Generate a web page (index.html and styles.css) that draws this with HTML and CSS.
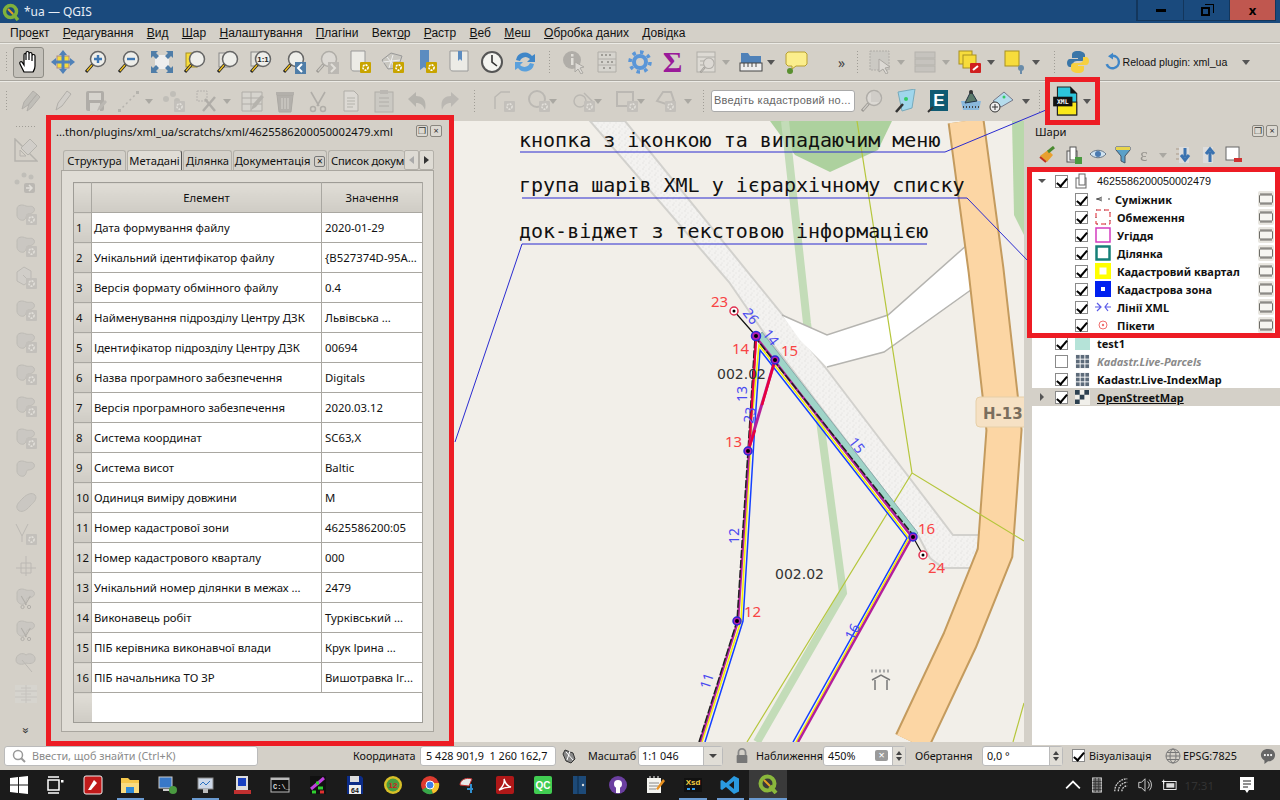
FILE: index.html
```html
<!DOCTYPE html>
<html lang="uk">
<head>
    <meta charset="UTF-8">
    <title>*ua — QGIS</title>
    <link rel="stylesheet" href="styles.css">
</head>
<body>
<svg class="defs" width="0" height="0">
    <defs>
        <g id="mag"><path d="M9 14L2 22" stroke="#222" stroke-width="3"/><path d="M8 15L3 21" stroke="#f0c020" stroke-width="1.4"/><circle cx="14" cy="9" r="7.5" fill="#eeeeea" stroke="#666" stroke-width="1.5"/></g>
        <g id="gear"><rect x="12" y="12" width="11" height="11" rx="1" fill="#c8a400"/><circle cx="17.5" cy="17.5" r="2.6" fill="none" stroke="#fff" stroke-width="1.6" stroke-dasharray="2 1"/></g>
        <g id="blob"><path d="M3 7c0-4 5-5 9-3 3 1 6-1 8 2 2 4-3 6-6 6-2 0-1 4-4 6-3 1-7-1-7-5 0-3 0-4 0-6z" fill="#b8b6ae" stroke="#8f8d86"/></g>
        <g id="scis"><path d="M5 3l8 14M19 3l-8 14" stroke="#666" stroke-width="1.6"/><circle cx="7" cy="20" r="2.5" fill="none" stroke="#666" stroke-width="1.5"/><circle cx="17" cy="20" r="2.5" fill="none" stroke="#666" stroke-width="1.5"/></g>
        <g id="doc"><path d="M5 2h10l4 4v16H5z" fill="#eee" stroke="#666"/><path d="M8 9h8M8 12h8M8 15h8M8 18h6" stroke="#777"/></g>
        <g id="chip"><rect x="1" y="1" width="16" height="16" fill="#e8e6e0" rx="2"/><rect x="2.500" y="5" width="13" height="8" rx="1" fill="#f6f5f1" stroke="#6e6d68"/><path d="M4 3v2M6 3v2M8 3v2M10 3v2M12 3v2M14 3v2M4 13v2M6 13v2M8 13v2M10 13v2M12 13v2M14 13v2" stroke="#6e6d68"/></g>
        <g id="grid"><rect x="1" y="1" width="14" height="14" fill="#5d6b7a"/><path d="M5.5 1v14M10.5 1v14M1 5.5h14M1 10.5h14" stroke="#fff" stroke-width="1"/></g>
    </defs>
</svg>

<div class="app">
    <div class="titlebar">
        <svg class="ic-18" viewBox="0 0 18 18"><circle cx="8.5" cy="8.5" r="6" fill="none" stroke="#7fb13c" stroke-width="3.5"/><path d="M11 11l5 6" stroke="#7fb13c" stroke-width="3.5"/><path d="M6 6l5 5" stroke="#e8a020" stroke-width="2"/></svg>
        <span class="title-text">*ua — QGIS</span>
        <div class="win-btns">
            <div class="win-btn"><span class="win-min"></span></div>
            <div class="win-btn"><span class="win-max"></span></div>
            <div class="win-btn win-close">x</div>
        </div>
    </div>

    <div class="menubar">
        <span>Про<u>е</u>кт</span>
        <span><u>Р</u>едагування</span>
        <span><u>В</u>ид</span>
        <span><u>Ш</u>ар</span>
        <span><u>Н</u>алаштування</span>
        <span><u>П</u>лагіни</span>
        <span>Вект<u>о</u>р</span>
        <span><u>Р</u>астр</span>
        <span><u>В</u>еб</span>
        <span><u>М</u>еш</span>
        <span><u>О</u>бробка даних</span>
        <span><u>Д</u>овідка</span>
    </div>

    <!-- toolbar 1 -->
    <div class="toolbar">
        <span class="grip"></span>
        <span class="tb pressed"><svg viewBox="0 0 24 24"><path d="M7 22l-4-8c-1-2 1-3 2-2l2 3V5c0-2 2-2 2 0v5V3c0-2 3-2 3 0v7V4c0-2 3-2 3 0v7V6c0-2 3-2 3 0v10c0 3-1 4-2 6z" fill="#fff" stroke="#000" stroke-width="1.2"/></svg></span>
        <span class="tb"><svg viewBox="0 0 24 24"><rect x="6" y="6" width="12" height="12" fill="#f7dc3c" stroke="#a88"/><path d="M12 0l4 5H8zM12 24l4-5H8zM0 12l5-4v8zM24 12l-5-4v8z" fill="#4f81b8"/><path d="M10.500 5h3v14h-3zM5 10.500h14v3H5z" fill="#4f81b8"/></svg></span>
        <span class="tb"><svg viewBox="0 0 24 24"><use href="#mag"/><path d="M10 9h8M14 5v8" stroke="#3f78b4" stroke-width="2.4"/></svg></span>
        <span class="tb"><svg viewBox="0 0 24 24"><use href="#mag"/><path d="M10 9h8" stroke="#3f78b4" stroke-width="2.4"/></svg></span>
        <span class="tb"><svg viewBox="0 0 24 24"><rect x="5" y="5" width="14" height="14" fill="#eee"/><path d="M1 1h7l-2 2 3 3-3 3-3-3-2 2zM23 1v7l-2-2-3 3-3-3 3-3-2-2zM1 23v-7l2 2 3-3 3 3-3 3 2 2zM23 23h-7l2-2-3-3 3-3 3 3 2-2z" fill="#4f7da8"/></svg></span>
        <span class="tb"><svg viewBox="0 0 24 24"><rect x="3" y="3" width="11" height="14" fill="#f7dc3c" stroke="#a89020"/><use href="#mag"/></svg></span>
        <span class="tb"><svg viewBox="0 0 24 24"><rect x="3" y="3" width="11" height="14" fill="#e4e2dc" stroke="#888"/><use href="#mag"/></svg></span>
        <span class="tb"><svg viewBox="0 0 24 24"><rect x="2" y="2" width="11" height="14" fill="#e4e2dc" stroke="#888"/><use href="#mag"/><text x="14" y="12" class="svg-bold-9" text-anchor="middle">1:1</text></svg></span>
        <span class="tb"><svg viewBox="0 0 24 24"><use href="#mag"/><rect x="13" y="12" width="11" height="12" fill="#4f7da8"/><path d="M20 14l-4 4 4 4" fill="none" stroke="#fff" stroke-width="2"/></svg></span>
        <span class="tb off"><svg viewBox="0 0 24 24"><use href="#mag"/><rect x="13" y="12" width="11" height="12" fill="#888"/><path d="M16 14l4 4-4 4" fill="none" stroke="#fff" stroke-width="2"/></svg></span>
        <span class="tb"><svg viewBox="0 0 24 24"><path d="M3 1h14v20H6c-2 0-3-1-3-3z" fill="#ecebe6" stroke="#999"/><use href="#gear"/></svg></span>
        <span class="tb"><svg viewBox="0 0 24 24"><path d="M1 10l9-7 11 3-4 12-10 1z" fill="#c9c7c0" stroke="#999"/><path d="M6 7l8 10M12 5l-4 13M2 12l17-2" stroke="#eee"/><use href="#gear"/></svg></span>
        <span class="tb"><svg viewBox="0 0 24 24"><path d="M6 0h9v18l-1 2-4-3-4 3z" fill="#5c8cc0"/><use href="#gear"/></svg></span>
        <span class="tb"><svg viewBox="0 0 24 24"><path d="M3 1h18v20H6c-2 0-3-1-3-3z" fill="#ecebe6" stroke="#999"/><path d="M11 1h4v10l-2-2-2 2z" fill="#5c8cc0"/></svg></span>
        <span class="tb"><svg viewBox="0 0 24 24"><circle cx="12" cy="12" r="10" fill="#f4f4f0" stroke="#555" stroke-width="2"/><path d="M12 5v7l5 4" fill="none" stroke="#333" stroke-width="1.6"/></svg></span>
        <span class="tb"><svg viewBox="0 0 24 24"><path d="M3 10a9 9 0 0 1 16-4l3-2v8h-8l3-3a6 6 0 0 0-10 2z" fill="#3f86c8"/><path d="M21 14a9 9 0 0 1-16 4l-3 2v-8h8l-3 3a6 6 0 0 0 10-2z" fill="#5aa0dc"/></svg></span>
        <span class="sep s1"></span>
        <span class="tb off"><svg viewBox="0 0 24 24"><circle cx="10" cy="10" r="9" fill="#666"/><rect x="9" y="8" width="2.500" height="7" fill="#fff"/><rect x="9" y="4" width="2.500" height="2.500" fill="#fff"/><path d="M13 12l9 5-4 1 3 5-2 1-3-5-3 3z" fill="#eee" stroke="#555"/></svg></span>
        <span class="tb off"><svg viewBox="0 0 24 24"><path d="M3 2h18v20H3z" fill="#ddd" stroke="#666"/><path d="M3 9h18M3 15h18" stroke="#666"/><path d="M6 5h2M10 5h2M14 5h2M6 12h2M12 12h2M16 12h2M8 18h2M14 18h2" stroke="#333" stroke-width="2"/></svg></span>
        <span class="tb"><svg viewBox="0 0 24 24"><circle cx="12" cy="12" r="6" fill="none" stroke="#5a96d8" stroke-width="4"/><circle cx="12" cy="12" r="10" fill="none" stroke="#5a96d8" stroke-width="3.5" stroke-dasharray="3.500 4.300"/></svg></span>
        <span class="tb sigma">Σ</span>
        <span class="tb off"><svg viewBox="0 0 24 24"><rect x="3" y="2" width="18" height="20" fill="#f0f0ec" stroke="#666"/><path d="M3 7h18M6 11h6M6 15h4" stroke="#666"/><use href="#mag" transform="translate(5 7) scale(.7)"/></svg></span>
        <span class="dd off"></span>
        <span class="tb"><svg viewBox="0 0 24 24"><path d="M2 3h7l2 3h11v7H2z" fill="#4f81b8"/><rect x="1" y="13" width="22" height="8" fill="#eee" stroke="#444"/><path d="M5 13v4M9 13v4M13 13v4M17 13v4" stroke="#444"/></svg></span>
        <span class="dd"></span>
        <span class="tb"><svg viewBox="0 0 24 24"><path d="M4 2h17l2 2v10l-2 2h-9l-4 3v-3H4l-2-2V4z" fill="#fbee8c" stroke="#b8a030"/><circle cx="6" cy="21" r="3" fill="#5a9030"/></svg></span>
        <span class="more">»</span>
        <span class="sep s2"></span>
        <span class="tb off"><svg viewBox="0 0 24 24"><rect x="2" y="1" width="19" height="19" fill="#bbb" stroke="#666" stroke-dasharray="2 1"/><path d="M11 9l11 8-5 1 3 5-2 1-3-5-4 3z" fill="#eee" stroke="#555"/></svg></span>
        <span class="dd off"></span>
        <span class="tb off"><svg viewBox="0 0 24 24"><rect x="2" y="2" width="20" height="6" fill="#aaa" stroke="#777"/><rect x="2" y="9" width="20" height="6" fill="#aaa" stroke="#777"/><rect x="2" y="16" width="20" height="6" fill="#aaa" stroke="#777"/></svg></span>
        <span class="dd off"></span>
        <span class="tb"><svg viewBox="0 0 24 24"><rect x="1" y="1" width="13" height="13" fill="#f7dc3c" stroke="#a89020"/><rect x="5" y="5" width="13" height="13" fill="#f7dc3c" stroke="#a89020"/><rect x="12" y="13" width="11" height="10" rx="1" fill="#d02020"/><path d="M15 20l5-4" stroke="#fff" stroke-width="2"/></svg></span>
        <span class="dd"></span>
        <span class="tb"><svg viewBox="0 0 24 24"><rect x="2" y="1" width="14" height="15" fill="#f7dc3c" stroke="#a89020"/><circle cx="18" cy="18" r="3" fill="#6a8caa"/><path d="M18 24v-5" stroke="#6a8caa" stroke-width="2"/></svg></span>
        <span class="dd"></span>
        <span class="sep s3"></span>
        <span class="tb"><svg viewBox="0 0 24 24"><path d="M12 1c-5 0-6 2-6 4v3h6v1H4c-2 0-3 2-3 4s1 4 3 4h3v-3c0-2 2-3 4-3h5c2 0 3-1 3-3V5c0-2-3-4-7-4z" fill="#3a76a8"/><path d="M12 23c5 0 6-2 6-4v-3h-6v-1h8c2 0 3-2 3-4s-1-4-3-4h-3v3c0 2-2 3-4 3H8c-2 0-3 1-3 3v3c0 2 3 4 7 4z" fill="#f6d040"/></svg></span>
        <span class="tb reload"><svg viewBox="0 0 24 24"><path d="M12 3a9 9 0 1 1-9 12l3-1a6 6 0 1 0 6-8v3L6 5l6-4z" fill="#3f86c8"/></svg></span>
        <span class="reload-text">Reload plugin: xml_ua</span>
        <span class="dd dd-r"></span>
    </div>

    <!-- toolbar 2 -->
    <div class="toolbar toolbar-2">
        <span class="grip"></span>
        <span class="tb off"><svg viewBox="0 0 24 24"><path d="M4 20l2-7 9-11 4 3-9 11zM9 22l2-7 8-10 3 3-9 11z" fill="#999" stroke="#666"/></svg></span>
        <span class="tb off"><svg viewBox="0 0 24 24"><path d="M5 21l2-7 9-12 4 3-9 12z" fill="#ccc" stroke="#666"/></svg></span>
        <span class="tb off"><svg viewBox="0 0 24 24"><rect x="2" y="2" width="18" height="20" rx="2" fill="#666"/><rect x="5" y="4" width="12" height="7" fill="#ddd"/><rect x="6" y="14" width="10" height="8" fill="#ddd"/><path d="M13 22l2-5 6-6 2 2-6 7z" fill="#888"/></svg></span>
        <span class="tb off"><svg viewBox="0 0 24 24"><path d="M2 22L20 4" stroke="#777" stroke-dasharray="2 3" stroke-width="1.5"/><rect x="1" y="20" width="3" height="3" fill="#777"/><rect x="19" y="2" width="3" height="3" fill="#777"/></svg></span>
        <span class="dd off"></span>
        <span class="tb off"><svg viewBox="0 0 24 24"><circle cx="4" cy="10" r="3" fill="#999"/><circle cx="11" cy="5" r="3" fill="#999"/><circle cx="15" cy="12" r="3" fill="#999"/><use href="#gear"/></svg></span>
        <span class="tb off"><svg viewBox="0 0 24 24"><rect x="2" y="2" width="10" height="10" fill="none" stroke="#777" stroke-dasharray="2 1"/><path d="M8 22L20 8M10 10l10 12" stroke="#666" stroke-width="2.5"/></svg></span>
        <span class="dd off"></span>
        <span class="tb off"><svg viewBox="0 0 24 24"><path d="M2 3h20v19H2z" fill="#ddd" stroke="#666"/><path d="M2 9h20M2 15h20M11 3v19" stroke="#666"/><path d="M11 21l2-6 8-9 3 2-8 10z" fill="#777"/></svg></span>
        <span class="tb off"><svg viewBox="0 0 24 24"><path d="M4 6h16l-2 17H6z" fill="#8c6a5c" stroke="#555"/><rect x="3" y="3" width="18" height="3" fill="#8c6a5c"/><path d="M9 9v11M12 9v11M15 9v11" stroke="#ddd"/></svg></span>
        <span class="tb off"><svg viewBox="0 0 24 24"><use href="#scis"/></svg></span>
        <span class="tb off"><svg viewBox="0 0 24 24"><use href="#doc"/></svg></span>
        <span class="tb off"><svg viewBox="0 0 24 24"><rect x="3" y="3" width="18" height="20" fill="#bbb" stroke="#666"/><rect x="8" y="1" width="8" height="4" fill="#888"/><path d="M7 9h10M7 13h10M7 17h10" stroke="#666"/></svg></span>
        <span class="tb off"><svg viewBox="0 0 24 24"><path d="M3 10l8-7v4c7 0 11 4 9 14-2-5-4-7-9-7v4z" fill="#7a7a7a"/></svg></span>
        <span class="tb off"><svg viewBox="0 0 24 24"><path d="M21 10l-8-7v4C6 7 2 11 4 21c2-5 4-7 9-7v4z" fill="#888"/></svg></span>
        <span class="sep s4"></span>
        <span class="tb tb-n off"><svg viewBox="0 0 24 24"><path d="M3 20V8l6-5h9" fill="none" stroke="#888" stroke-width="1.500"/><use href="#gear"/></svg></span>
        <span class="tb tb-n n2 off"><svg viewBox="0 0 24 24"><circle cx="10" cy="10" r="8" fill="none" stroke="#888" stroke-width="2"/><use href="#gear"/></svg></span>
        <span class="dd dd-n off"></span>
        <span class="tb tb-n n3 off"><svg viewBox="0 0 24 24"><circle cx="8" cy="12" r="6" fill="none" stroke="#888" stroke-width="1.500"/><path d="M12 4l8 8-6 6" fill="none" stroke="#888" stroke-width="1.500"/><use href="#gear"/></svg></span>
        <span class="dd dd-n off"></span>
        <span class="tb tb-n n4 off"><svg viewBox="0 0 24 24"><rect x="2" y="3" width="16" height="14" fill="none" stroke="#888" stroke-width="2"/><use href="#gear"/></svg></span>
        <span class="dd dd-n off"></span>
        <span class="tb tb-n n5 off"><svg viewBox="0 0 24 24"><path d="M4 12l6-9h8l3 9-8 3z" fill="none" stroke="#888" stroke-width="2"/><use href="#gear"/></svg></span>
        <span class="dd dd-p off"></span>
        <span class="sep s5"></span>
        <div class="cad-input">Введіть кадастровий но...</div>
        <span class="tb off"><svg viewBox="0 0 24 24"><use href="#mag"/><rect x="11" y="3" width="9" height="10" fill="#8aa" opacity=".5"/></svg></span>
        <span class="tb"><svg viewBox="0 0 24 24"><path d="M5 3l17-3-3 19-10 3z" fill="#9fd6ec" stroke="#7ab"/><circle cx="13" cy="10" r="2" fill="#3c6"/><path d="M3 23l7-8" stroke="#333" stroke-width="2.500"/></svg></span>
        <span class="tb"><svg viewBox="0 0 24 24"><rect x="4" y="1" width="18" height="21" fill="#0f5a72"/><text x="13" y="17" class="svg-e" text-anchor="middle">E</text><path d="M2 23l5-5" stroke="#333" stroke-width="2"/></svg></span>
        <span class="tb"><svg viewBox="0 0 24 24"><path d="M2 12h20l-2 9H4z" fill="#8ab8dc"/><path d="M6 14l6-12 6 10z" fill="#5a7a6a" stroke="#234"/><circle cx="12" cy="3" r="2" fill="#333"/><path d="M4 18h16" stroke="#444" stroke-dasharray="1 2" stroke-width="2"/></svg></span>
        <span class="tb n6"><svg viewBox="0 0 24 24"><path d="M4 12l11-9 9 8-12 7z" fill="#b5dced" stroke="#778"/><circle cx="15" cy="8" r="1.500" fill="#3c6"/><circle cx="6" cy="18" r="5" fill="#eee" stroke="#333"/><path d="M3 18h6M6 15v6" stroke="#333"/></svg></span>
        <span class="dd dd-p"></span>
        <span class="sep s6"></span>
        <span class="tb tb-xml"><svg viewBox="0 0 24 28"><path d="M4 1h12l6 6v20H4z" fill="#2cc5dc" stroke="#222"/><rect x="4" y="15" width="18" height="12" fill="#f9e81a" stroke="#222"/><path d="M16 1l6 6h-6z" fill="#111"/><rect x="0" y="10" width="18" height="9" fill="#111"/><text x="9" y="17" class="svg-xml" text-anchor="middle">XML</text></svg></span>
        <span class="dd"></span>
    </div>

    <div class="main">
        <!-- left digitizing strip -->
        <div class="strip">
            <span class="strip-grip"></span>
            <span class="st off"><svg viewBox="0 0 24 24"><path d="M1 1v22h22z" fill="none" stroke="#777" stroke-width="1.500"/><path d="M6 12v6h6z" fill="none" stroke="#777"/><path d="M16 1l7 7-9 9-7-7z" fill="#ccc" stroke="#777"/></svg></span>
            <span class="st off"><svg viewBox="0 0 24 24"><circle cx="3" cy="12" r="2.500" fill="#999"/><circle cx="10" cy="5" r="2.500" fill="#999"/><circle cx="17" cy="7" r="2.500" fill="#999"/><rect x="10" y="13" width="11" height="10" rx="2" fill="#888"/><path d="M12 18h5M15 15l3 3-3 3" stroke="#fff" fill="none" stroke-width="1.500"/></svg></span>
            <span class="st off"><svg viewBox="0 0 24 24"><use href="#blob"/><use href="#gear"/></svg></span>
            <span class="st off"><svg viewBox="0 0 24 24"><use href="#blob"/><use href="#gear"/></svg></span>
            <span class="st off"><svg viewBox="0 0 24 24"><path d="M3 6l7-5 7 4v9l-7 5-7-4z" fill="#ccc" stroke="#888"/><path d="M9 9l6 6" stroke="#888"/><use href="#gear"/></svg></span>
            <span class="st off"><svg viewBox="0 0 24 24"><use href="#blob"/><use href="#gear"/></svg></span>
            <span class="st off"><svg viewBox="0 0 24 24"><use href="#blob"/><use href="#gear"/></svg></span>
            <span class="st off"><svg viewBox="0 0 24 24"><use href="#blob"/><use href="#gear"/></svg></span>
            <span class="st off"><svg viewBox="0 0 24 24"><use href="#blob"/><use href="#gear"/></svg></span>
            <span class="st off"><svg viewBox="0 0 24 24"><use href="#blob"/><use href="#gear"/></svg></span>
            <span class="st off"><svg viewBox="0 0 24 24"><use href="#blob"/></svg></span>
            <span class="st off"><svg viewBox="0 0 24 24"><path d="M4 20c-3-4 0-7 5-12 4-4 9-6 12-3 3 4-2 8-5 11-4 5-9 7-12 4z" fill="#b8b6ae" stroke="#8f8d86"/></svg></span>
            <span class="st off"><svg viewBox="0 0 24 24"><path d="M2 2l6 12 6-12M8 14v6" fill="none" stroke="#888"/><use href="#gear"/></svg></span>
            <span class="st off"><svg viewBox="0 0 24 24"><path d="M2 14h20M12 2v20M7 9h10v10H7z" fill="none" stroke="#888"/></svg></span>
            <span class="st off"><svg viewBox="0 0 24 24"><use href="#blob"/><use href="#scis" transform="translate(4 8) scale(.65)"/></svg></span>
            <span class="st off"><svg viewBox="0 0 24 24"><use href="#blob"/><use href="#scis" transform="translate(4 8) scale(.65)"/></svg></span>
            <span class="st off"><svg viewBox="0 0 24 24"><path d="M2 10c0-6 7-8 10-5 4-3 10 0 9 5-1 4-6 4-9 3-3 2-10 2-10-3z" fill="#b8b6ae" stroke="#8f8d86"/><path d="M8 10l10 12" stroke="#888"/></svg></span>
            <span class="st off"><svg viewBox="0 0 24 24"><rect x="1" y="3" width="22" height="18" fill="#ddd"/><path d="M1 9h22M1 15h22M12 3v18M7 6h10M7 12h10M7 18h10" stroke="#aaa"/></svg></span>
            <span class="strip-more">»</span>
        </div>

        <!-- xml dock -->
        <div class="dock-left">
            <div class="dock-head">
                <span class="dock-title">...thon/plugins/xml_ua/scratchs/xml/4625586200050002479.xml</span>
                <span class="dock-btn">❐</span><span class="dock-btn">×</span>
            </div>
            <div class="tabs">
                <div class="tab t1">Структура</div>
                <div class="tab t2 tab-on">Метадані</div>
                <div class="tab t3">Ділянка</div>
                <div class="tab t4">Документація <span class="tab-x">×</span></div>
                <div class="tab tab-cut">Список докум</div>
                <div class="tab-scroll"><span class="arr-l"></span></div>
                <div class="tab-scroll"><span class="arr-r"></span></div>
            </div>
            <div class="pane">
                <table class="meta">
                    <colgroup><col class="c0"><col class="c1"><col class="c2"></colgroup>
                    <thead><tr><th></th><th>Елемент</th><th>Значення</th></tr></thead>
                    <tbody>
                        <tr><th>1</th><td>Дата формування файлу</td><td>2020-01-29</td></tr>
                        <tr><th>2</th><td>Унікальний ідентифікатор файлу</td><td>{B527374D-95A...</td></tr>
                        <tr><th>3</th><td>Версія формату обмінного файлу</td><td>0.4</td></tr>
                        <tr><th>4</th><td>Найменування підрозділу Центру ДЗК</td><td>Львівська ...</td></tr>
                        <tr><th>5</th><td>Ідентифікатор підрозділу Центру ДЗК</td><td>00694</td></tr>
                        <tr><th>6</th><td>Назва програмного забезпечення</td><td>Digitals</td></tr>
                        <tr><th>7</th><td>Версія програмного забезпечення</td><td>2020.03.12</td></tr>
                        <tr><th>8</th><td>Система координат</td><td>SC63,X</td></tr>
                        <tr><th>9</th><td>Система висот</td><td>Baltic</td></tr>
                        <tr><th>10</th><td>Одиниця виміру довжини</td><td>M</td></tr>
                        <tr><th>11</th><td>Номер кадастрової зони</td><td>4625586200:05</td></tr>
                        <tr><th>12</th><td>Номер кадастрового кварталу</td><td>000</td></tr>
                        <tr><th>13</th><td>Унікальний номер ділянки в межах ...</td><td>2479</td></tr>
                        <tr><th>14</th><td>Виконавець робіт</td><td>Турківський ...</td></tr>
                        <tr><th>15</th><td>ПІБ керівника виконавчої влади</td><td>Крук Ірина ...</td></tr>
                        <tr><th>16</th><td>ПІБ начальника ТО ЗР</td><td>Вишотравка Іг...</td></tr>
                        <tr class="row-empty"><th></th><td></td><td></td></tr>
                    </tbody>
                </table>
            </div>
        </div>

        <!-- map canvas -->
        <div class="map">
            <svg class="map-svg" viewBox="454 121 570 621">
                <defs>
                    <pattern id="speck" width="6" height="6" patternUnits="userSpaceOnUse">
                        <rect width="6" height="6" fill="#f3f2f0"/>
                        <circle cx="1" cy="1" r=".7" fill="#e2e1de"/><circle cx="4" cy="3" r=".7" fill="#e6e5e2"/><circle cx="2" cy="5" r=".6" fill="#dfdedb"/>
                    </pattern>
                </defs>
                <rect x="454" y="121" width="570" height="621" fill="#f2efe9"/>
                <!-- landuse -->
                <path d="M770 121H892L878 150 830 172 795 155Z" fill="#add19e"/>
                <path d="M1012 121H1024V235L1014 215Z" fill="#b9d8ab"/>
                <path d="M785 121L807 323 843 593 757 742" fill="none" stroke="#c3dcb8" stroke-width="8"/>
                <!-- footway and white branch -->
                <path d="M590 121H625L825 367 873 430 953 535H981L973 568H943L930 558 918 535 762 330 729 282Z" fill="url(#speck)" stroke="#d2d1cd" stroke-width="2"/>
                <path d="M782 315L827 335 888 315 967 245 982 282 884 352 827 367 800 340Z" fill="#fff"/>
                <path d="M782 315L827 335 888 315 967 245M982 282L884 352 827 367" fill="none" stroke="#b5b4b0" stroke-width="1.500"/>
                <!-- orange road -->
                <path d="M966 121L986 270 1004 430 995 553 960 640 912 742" fill="none" stroke="#c49b5e" stroke-width="37"/>
                <path d="M966 121L986 270 1004 430 995 553 960 640 912 742" fill="none" stroke="#fcd6a4" stroke-width="33"/>
                <!-- admin lines -->
                <path d="M857 121L912 473 1024 541M912 473L747 742M1024 703L1013 742" fill="none" stroke="#b5c63c" stroke-width="1.2"/>
                <!-- teal band -->
                <path d="M762 332L918 533 912 538 757 340Z" fill="#9fd4c8" stroke="#8aa" stroke-width="1"/>
                <!-- parcel outlines -->
                <path d="M705 742L743 621 755 423 760 350 907 538 793 742" fill="none" stroke="#1440ff" stroke-width="1.500"/>
                <path d="M702 742L741 621 752 420 759 345 909 538 796 742" fill="none" stroke="#f5f200" stroke-width="1.500"/>
                <path d="M700 742L738 621 749 451 756 337 912 537 798 742" fill="none" stroke="#b3209c" stroke-width="2.500"/>
                <path d="M699 742L737 621 748 451 755 337 913 535" fill="none" stroke="#222" stroke-width="1.500" stroke-dasharray="8 2"/>
                <path d="M749 451L756 340" stroke="#e8003c" stroke-width="2"/>
                <path d="M775 360L748 451" stroke="#b3209c" stroke-width="3"/>
                <path d="M775 360L762 405M755 430L748 451" stroke="#e8003c" stroke-width="2.500"/>
                <path d="M734 311L756 336M923 555L913 537" stroke="#111" stroke-width="1.200"/>
                <!-- vertices -->
                <g class="vx"><circle cx="756" cy="336" r="4.500"/><circle cx="775" cy="360" r="4"/><circle cx="748" cy="451" r="4"/><circle cx="737" cy="621" r="4"/><circle cx="913" cy="537" r="4"/></g>
                <g class="vx vx-w"><circle cx="734" cy="311" r="4"/><circle cx="923" cy="555" r="4"/></g>
                <g class="dots"><circle cx="756" cy="336" r="2"/><circle cx="775" cy="360" r="2"/><circle cx="748" cy="451" r="2"/><circle cx="737" cy="621" r="2"/><circle cx="913" cy="537" r="2"/><circle cx="734" cy="311" r="1.500"/><circle cx="923" cy="555" r="1.500"/></g>
                <!-- labels -->
                <g class="lbl-red">
                    <text x="711" y="307">23</text><text x="732" y="354">14</text><text x="781" y="356">15</text>
                    <text x="725" y="447">13</text><text x="744" y="617">12</text><text x="918" y="534">16</text><text x="928" y="573">24</text>
                </g>
                <g class="lbl-blue">
                    <text transform="translate(742 313) rotate(52)">26</text><text transform="translate(762 334) rotate(52)">14</text>
                    <text transform="translate(848 442) rotate(52)">15</text><text transform="translate(747 402) rotate(-90)">13</text>
                    <text transform="translate(753 424) rotate(-80)">23</text><text transform="translate(739 544) rotate(-90)">12</text>
                    <text transform="translate(709 690) rotate(-72)">11</text><text transform="translate(853 641) rotate(-62)">16</text>
                </g>
                <text x="717" y="379" class="lbl-grey">002.02</text>
                <text x="775" y="579" class="lbl-grey">002.02</text>
                <!-- shield -->
                <rect x="976" y="397" width="60" height="30" rx="4" fill="#f6e1c4" stroke="#e6cfa8"/>
                <text x="983" y="419" class="lbl-shield">Н-13</text>
                <!-- hut -->
                <g class="hut"><path d="M872 680L881 675 890 680M875 680V690M887 680V690" fill="none" stroke="#777" stroke-width="1.500"/><path d="M871 671h20" stroke="#aaa" stroke-width="3" stroke-dasharray="2 2"/></g>
            </svg>
        </div>

        <!-- layers dock -->
        <div class="dock-right">
            <div class="dock-head dock-head-r">
                <span class="dock-title">Шари</span>
                <span class="dock-btn">❐</span><span class="dock-btn">×</span>
            </div>
            <div class="layer-tools">
                <svg class="lt lt1" viewBox="0 0 18 18"><path d="M2 10l8-6 5 5-6 7z" fill="#e8a030"/><path d="M10 6l6-5" stroke="#4a8a30" stroke-width="3"/><path d="M2 11l6 5" stroke="#c03020" stroke-width="2"/></svg>
                <svg class="lt lt2" viewBox="0 0 18 18"><rect x="2" y="5" width="10" height="11" fill="#eee" stroke="#555"/><rect x="5" y="1" width="6" height="13" fill="#fff" stroke="#555"/><rect x="10" y="11" width="7" height="7" fill="#4a9a40"/></svg>
                <svg class="lt lt3" viewBox="0 0 18 18"><path d="M0 8c4-5 12-5 16 0-4 5-12 5-16 0z" fill="#cfe2f0" stroke="#678"/><circle cx="8" cy="8" r="3" fill="#4a7ab0"/></svg>
                <svg class="lt lt4" viewBox="0 0 18 18"><path d="M1 1h14v3l-5 6v7l-4-2v-5L1 4z" fill="#5aa0c8" stroke="#456"/><rect x="1" y="1" width="14" height="3" fill="#e8d44c"/></svg>
                <span class="lt-e off">ε</span>
                <span class="dd off lt-dd"></span>
                <svg class="lt lt6" viewBox="0 0 18 18"><path d="M1 3h3M1 8h3M1 13h3" stroke="#a98"/><rect x="4" y="1" width="10" height="16" fill="#ddd"/><path d="M10 2v9M6 9l4 5 4-5" stroke="#3a72b0" stroke-width="3" fill="none"/></svg>
                <svg class="lt lt7" viewBox="0 0 18 18"><rect x="3" y="1" width="10" height="16" fill="#ddd"/><path d="M10 16V6M6 8l4-5 4 5" stroke="#3a72b0" stroke-width="3" fill="none"/></svg>
                <svg class="lt lt8" viewBox="0 0 18 18"><rect x="1" y="1" width="13" height="13" fill="#fff" stroke="#666"/><rect x="9" y="12" width="8" height="4" fill="#d03030"/></svg>
            </div>
            <div class="tree">
                <div class="row r0"><span class="arr-d"></span><span class="cb on"></span><svg class="sw sw-g" viewBox="0 0 16 16"><rect x="1" y="5" width="10" height="10" fill="none" stroke="#666"/><rect x="4" y="1" width="6" height="11" fill="#fff" stroke="#666"/></svg><span class="lname lname-reg">4625586200050002479</span></div>
                <div class="row r1"><span class="cb on"></span><svg class="sw sw-c" viewBox="0 0 16 16"><path d="M1 8h6M14 7v2" stroke="#444"/><path d="M7 6L2 8l5 2" fill="none" stroke="#444" stroke-width=".8"/></svg><span class="lname lname-tight">Суміжник</span><svg class="ind" viewBox="0 0 18 18"><use href="#chip"/></svg></div>
                <div class="row r1"><span class="cb on"></span><svg class="sw" viewBox="0 0 16 16"><rect x="1" y="1" width="14" height="14" fill="none" stroke="#e0202c" stroke-dasharray="5 3"/><rect x="1" y="1" width="14" height="14" fill="none" stroke="#333" stroke-width=".5" stroke-dasharray="1 7"/></svg><span class="lname">Обмеження</span><svg class="ind" viewBox="0 0 18 18"><use href="#chip"/></svg></div>
                <div class="row r1"><span class="cb on"></span><svg class="sw" viewBox="0 0 16 16"><rect x="1" y="1" width="14" height="14" fill="none" stroke="#d43cc0" stroke-width="1.500"/></svg><span class="lname">Угіддя</span><svg class="ind" viewBox="0 0 18 18"><use href="#chip"/></svg></div>
                <div class="row r1"><span class="cb on"></span><svg class="sw" viewBox="0 0 16 16"><rect x="1.500" y="1.500" width="13" height="13" fill="#fff" stroke="#168078" stroke-width="2.500"/></svg><span class="lname">Ділянка</span><svg class="ind" viewBox="0 0 18 18"><use href="#chip"/></svg></div>
                <div class="row r1"><span class="cb on"></span><svg class="sw" viewBox="0 0 16 16"><rect width="16" height="16" fill="#ffff00"/><rect x="4.500" y="4.500" width="7" height="7" fill="#fff"/></svg><span class="lname">Кадастровий квартал</span><svg class="ind" viewBox="0 0 18 18"><use href="#chip"/></svg></div>
                <div class="row r1"><span class="cb on"></span><svg class="sw" viewBox="0 0 16 16"><rect width="16" height="16" fill="#0020f0"/><rect x="6" y="6" width="4" height="4" fill="#fff"/></svg><span class="lname">Кадастрова зона</span><svg class="ind" viewBox="0 0 18 18"><use href="#chip"/></svg></div>
                <div class="row r1"><span class="cb on"></span><svg class="sw" viewBox="0 0 16 16"><path d="M0 8h6M10 8h6M2 4l4 4-4 4M13 4l-3 4 3 4" fill="none" stroke="#5a5ae8" stroke-width="1.200"/></svg><span class="lname">Лінії XML</span><svg class="ind" viewBox="0 0 18 18"><use href="#chip"/></svg></div>
                <div class="row r1"><span class="cb on"></span><svg class="sw" viewBox="0 0 16 16"><circle cx="8" cy="8" r="4" fill="none" stroke="#f07070"/><circle cx="8" cy="8" r="1.200" fill="#f07070"/></svg><span class="lname">Пікети</span><svg class="ind" viewBox="0 0 18 18"><use href="#chip"/></svg></div>
                <div class="row r2"><span class="cb on"></span><span class="swatch-teal"></span><span class="lname">test1</span></div>
                <div class="row r2"><span class="cb"></span><svg class="sw-grid" viewBox="0 0 16 16"><use href="#grid"/></svg><span class="lname lname-off">Kadastr.Live-Parcels</span></div>
                <div class="row r2"><span class="cb on"></span><svg class="sw-grid" viewBox="0 0 16 16"><use href="#grid"/></svg><span class="lname">Kadastr.Live-IndexMap</span></div>
                <div class="row r2 row-sel"><span class="arr-rr"></span><span class="cb on"></span><svg class="sw-grid" viewBox="0 0 16 16"><rect width="16" height="16" fill="#f0efea"/><path d="M0 0h5v5H0zM10 0h5v5h-5zM5 5h5v5H5zM0 10h5v5H0z" fill="#2c4050"/></svg><span class="lname lname-u">OpenStreetMap</span></div>
            </div>
        </div>
    </div>

    <!-- status bar -->
    <div class="statusbar">
        <div class="locator"><svg class="ic-14" viewBox="0 0 14 14"><circle cx="6" cy="6" r="4.500" fill="none" stroke="#999" stroke-width="1.500"/><path d="M9 9l4 4" stroke="#999" stroke-width="2"/></svg><span>Ввести, щоб знайти (Ctrl+K)</span></div>
        <span class="st-label st-coord">Координата</span>
        <div class="field f-coord">5 428 901,9  1 260 162,7</div>
        <svg class="ic-16 mouse" viewBox="0 0 16 16"><path d="M3 2l8 3 2 6-4 4-5-2-3-7z" fill="#888" stroke="#333"/><path d="M4 4l7 8M8 3l-3 9" stroke="#fff"/></svg>
        <span class="st-label st-scale">Масштаб</span>
        <div class="combo"><span>1:1 046</span><span class="combo-btn"><span class="dd-in"></span></span></div>
        <svg class="ic-16 lock" viewBox="0 0 14 18"><path d="M3 8V5a4 4 0 0 1 8 0v3" fill="none" stroke="#888" stroke-width="2"/><rect x="1" y="8" width="12" height="9" rx="1" fill="#777"/></svg>
        <span class="st-label st-mag">Наближення</span>
        <div class="spin s-mag"><span class="spin-val">450%</span><span class="spin-x">×</span><span class="spin-btn"><i class="up"></i><i class="down"></i></span></div>
        <span class="st-label st-rot">Обертання</span>
        <div class="spin s-rot"><span class="spin-val">0,0 °</span><span class="spin-btn"><i class="up"></i><i class="down"></i></span></div>
        <span class="cb on st-cb"></span>
        <span class="st-label st-vis">Візуалізація</span>
        <svg class="ic-16 globe" viewBox="0 0 16 16"><circle cx="8" cy="8" r="7" fill="none" stroke="#777"/><ellipse cx="8" cy="8" rx="3" ry="7" fill="none" stroke="#777"/><path d="M1 8h14M2 4.500h12M2 11.500h12" stroke="#777"/></svg>
        <span class="st-label st-epsg">EPSG:7825</span>
        <svg class="ic-16 bubble" viewBox="0 0 18 18"><path d="M9 1c5 0 8 3 8 7s-3 7-8 7l-4 3v-4C3 13 1 11 1 8c0-4 3-7 8-7z" fill="#666"/><circle cx="5.500" cy="8" r="1.200" fill="#fff"/><circle cx="9" cy="8" r="1.200" fill="#fff"/><circle cx="12.500" cy="8" r="1.200" fill="#fff"/></svg>
    </div>

    <!-- taskbar -->
    <div class="taskbar">
        <span class="tk tk-win"><svg viewBox="0 0 20 20"><path d="M1 3l8-1v7.500H1zM10 2l9-1v8.500h-9zM1 10.500h8V18l-8-1zM10 10.500h9V19l-9-1z" fill="#fff"/></svg></span>
        <span class="tk tk-view"><svg viewBox="0 0 20 20"><rect x="3" y="5" width="11" height="10" fill="none" stroke="#fff" stroke-width="1.500"/><path d="M3 2h11M3 18h11" stroke="#fff" stroke-width="1.500"/><rect x="16" y="5" width="2.500" height="2.500" fill="#fff"/></svg></span>
        <span class="tk"><svg viewBox="0 0 20 20"><rect x="1" y="1" width="18" height="18" rx="2" fill="#c01a1a" stroke="#eee"/><path d="M5 15l6-10 3 3-6 7z" fill="#fff"/></svg></span>
        <span class="tk tk-on"><svg viewBox="0 0 20 20"><path d="M1 3h7l2 2h9v13H1z" fill="#f6c84c"/><rect x="1" y="8" width="18" height="10" fill="#f9dc80"/><rect x="6" y="12" width="8" height="6" fill="#2f8ad8"/></svg></span>
        <span class="tk"><svg viewBox="0 0 20 20"><rect x="1" y="2" width="13" height="11" fill="#3878c8" stroke="#ccc"/><path d="M5 15h6" stroke="#ccc" stroke-width="2"/><circle cx="15" cy="15" r="4" fill="#4a9a40"/></svg></span>
        <span class="tk tk-on"><svg viewBox="0 0 20 20"><rect x="3" y="3" width="15" height="11" fill="#cdd8e8" stroke="#888"/><path d="M5 10l3-3 3 3 4-4" fill="none" stroke="#2a70c0"/><rect x="8" y="14" width="5" height="4" fill="#bbb"/></svg></span>
        <span class="tk"><svg viewBox="0 0 20 20"><rect x="3" y="1" width="12" height="14" fill="#ddd"/><rect x="5" y="3" width="8" height="8" fill="#1840c0"/><rect x="1" y="15" width="17" height="4" fill="#c03030"/></svg></span>
        <span class="tk"><svg viewBox="0 0 20 20"><rect x="1" y="3" width="18" height="14" fill="#111" stroke="#bbb"/><rect x="1" y="3" width="18" height="2" fill="#bbb"/><text x="3" y="14" class="svg-cmd">C:\_</text></svg></span>
        <span class="tk"><svg viewBox="0 0 20 20"><rect x="2" y="1" width="16" height="18" fill="#111"/><path d="M3 14L16 3" stroke="#c040e0" stroke-width="3"/><path d="M4 17h4M10 13h5M8 8h3" stroke="#30d030" stroke-width="3"/><path d="M12 17h4" stroke="#e03030" stroke-width="3"/></svg></span>
        <span class="tk"><svg viewBox="0 0 20 20"><path d="M2 1h14l2 2v16H2z" fill="#0c2c88"/><rect x="5" y="1" width="9" height="6" fill="#ddd"/><rect x="4" y="10" width="12" height="9" fill="#eee"/><text x="10" y="18" class="svg-64" text-anchor="middle">64</text></svg></span>
        <span class="tk"><svg viewBox="0 0 20 20"><circle cx="10" cy="10" r="9" fill="#d8c028"/><circle cx="10" cy="10" r="6.500" fill="#4a9a40"/><text x="10" y="13" class="svg-12" text-anchor="middle">12</text></svg></span>
        <span class="tk"><svg viewBox="0 0 20 20"><circle cx="10" cy="10" r="9" fill="#dd3b2f"/><path d="M10 10L2 15a9 9 0 0 0 11 3.500z" fill="#37a84a"/><path d="M10 10l3 8.500A9 9 0 0 0 19 8H10z" fill="#f6c42c"/><circle cx="10" cy="10" r="4" fill="#3f80e8" stroke="#fff"/></svg></span>
        <span class="tk"><svg viewBox="0 0 20 20"><path d="M2 10C2 5 8 2 14 4l-3 7z" fill="#e8e8e8" stroke="#c03030"/><path d="M13 9v9M9 14h6" stroke="#3090d0" stroke-width="2"/></svg></span>
        <span class="tk"><svg viewBox="0 0 20 20"><rect x="1" y="1" width="18" height="18" rx="2" fill="#b01818"/><path d="M4 15c4-3 6-8 5-11 1 4 3 7 7 8-4 0-8 1-12 3z" fill="none" stroke="#fff" stroke-width="1.500"/></svg></span>
        <span class="tk"><svg viewBox="0 0 20 20"><rect x="1" y="1" width="18" height="18" rx="2" fill="#41cd52"/><text x="10" y="14" class="svg-qc" text-anchor="middle">QC</text></svg></span>
        <span class="tk"><svg viewBox="0 0 20 20"><rect x="3" y="1" width="13" height="18" fill="#1d4a78"/><path d="M8 1v18" stroke="#0c2a48"/><circle cx="13" cy="10" r="1.200" fill="#ddd"/></svg></span>
        <span class="tk"><svg viewBox="0 0 20 20"><circle cx="10" cy="10" r="9" fill="#6b3fa0"/><circle cx="10" cy="9" r="4" fill="#fff"/><rect x="8" y="12" width="4" height="6" fill="#fff"/></svg></span>
        <span class="tk"><svg viewBox="0 0 20 20"><rect x="2" y="3" width="14" height="15" fill="#f4f4f0"/><path d="M4 8h10M4 11h10M4 14h7" stroke="#888"/><path d="M5 3v-2M9 3v-2M13 3v-2" stroke="#fff"/><path d="M11 14l7-10 2 2-7 9z" fill="#e89020"/></svg></span>
        <span class="tk tk-on"><svg viewBox="0 0 20 20"><rect x="1" y="3" width="18" height="14" fill="#111"/><text x="10" y="10" class="svg-xsd" text-anchor="middle">Xsd</text><path d="M4 14h3M9 14h3" stroke="#30a0f0" stroke-width="2"/></svg></span>
        <span class="tk tk-on"><svg viewBox="0 0 20 20"><path d="M14 1l5 2.500v13L14 19 6 12l-4 3-1.500-1V6L2 5l4 3zM14 6l-5 4 5 4z" fill="#2a9ae0"/></svg></span>
        <span class="tk tk-qgis"><svg viewBox="0 0 20 20"><circle cx="9.500" cy="9.500" r="7" fill="none" stroke="#8ab83c" stroke-width="4"/><path d="M12 12l6 7" stroke="#8ab83c" stroke-width="4"/><path d="M6 6l6 6" stroke="#e8a020" stroke-width="2"/></svg></span>
        <div class="tray">
            <svg class="tr tr-chev" viewBox="0 0 14 14"><path d="M1 10l6-6 6 6" fill="none" stroke="#fff" stroke-width="1.500"/></svg>
            <svg class="tr tr-mem" viewBox="0 0 14 18"><rect x="2" y="1" width="10" height="16" fill="#777" stroke="#ccc"/><path d="M2 5h10M2 8h10M2 11h10M2 14h10M5 1v16M9 1v16" stroke="#333"/></svg>
            <svg class="tr tr-wifi" viewBox="0 0 18 18"><path d="M2 16a14 14 0 0 1 14-14M6 16a10 10 0 0 1 10-10M10 16a6 6 0 0 1 6-6" fill="none" stroke="#ccc" stroke-width="1.500" stroke-dasharray="2 1"/></svg>
            <svg class="tr tr-snd" viewBox="0 0 18 18"><path d="M2 6h3l4-4v14l-4-4H2z" fill="none" stroke="#ddd"/><path d="M12 5a6 6 0 0 1 0 8M14 3a9 9 0 0 1 0 12" fill="none" stroke="#ddd"/></svg>
            <svg class="tr tr-bat" viewBox="0 0 18 18"><rect x="3" y="5" width="14" height="9" fill="none" stroke="#fff"/><rect x="6" y="7" width="9" height="5" fill="#ddd"/><path d="M3 3v5M1 5h4" stroke="#fff"/></svg>
            <span class="clock">17:31</span>
            <svg class="tr tr-note" viewBox="0 0 18 18"><path d="M2 1h14v13h-5l-2 3-2-3H2z" fill="#fff"/><path d="M5 5h8M5 8h8M5 11h5" stroke="#222"/></svg>
        </div>
    </div>
</div>

<!-- callouts drawn on top of the screenshot -->
<svg class="overlay" viewBox="0 0 1280 800">
    <g class="note">
        <text x="519" y="147">кнопка з іконкою та випадаючим меню</text>
        <text x="519" y="192">група шарів XML у ієрархічному списку</text>
        <text x="519" y="238">док-віджет з текстовою інформацією</text>
    </g>
    <path d="M520 152H945L1046 110M522 198H967L1029 262M927 244H522L455 442" fill="none" stroke="#2a2ad0" stroke-width="1"/>
</svg>
<div class="mark mark-dock"></div>
<div class="mark mark-xml"></div>
<div class="mark mark-tree"></div>
</body>
</html>
```

FILE: styles.css
```css
* {
    box-sizing: border-box;
}

body {
    margin: 0;
    font-family: "Noto Sans", "Open Sans", sans-serif;
    font-size: 12px;
    color: #111;
    background: #d4d0c8;
}

.defs {
    position: absolute;
}

.app {
    width: 1280px;
    height: 800px;
    display: flex;
    flex-direction: column;
    overflow: hidden;
}

/* title bar */
.titlebar {
    height: 23px;
    flex: none;
    background: #1a4a7d;
    display: flex;
    align-items: center;
    padding-left: 2px;
    color: #fff;
}

.ic-18 {
    width: 18px;
    height: 18px;
}

.title-text {
    margin-left: 4px;
    font-size: 12px;
    color: #e8eef6;
}

.win-btns {
    margin-left: auto;
    margin-right: 4px;
    align-self: flex-start;
    display: flex;
    height: 21px;
    border: 1px solid #13365c;
    border-top: 0;
}

.win-btn {
    width: 46px;
    display: flex;
    align-items: center;
    justify-content: center;
    border-left: 1px solid #13365c;
}

.win-min {
    width: 10px;
    height: 3px;
    background: #000;
}

.win-max {
    width: 9px;
    height: 9px;
    margin: 2px 0 0 -2px;
    border: 2px solid #000;
    position: relative;
}

.win-max::before {
    content: "";
    position: absolute;
    left: 2px;
    top: -5px;
    width: 8px;
    height: 8px;
    border: solid #000;
    border-width: 1px 1px 0 0;
}

.win-close {
    background: #c0574f;
    color: #000;
    font-weight: 700;
    font-size: 13px;
}

/* menu */
.menubar {
    height: 20px;
    flex: none;
    display: flex;
    align-items: center;
    padding-left: 10px;
    gap: 13.300px;
    border-bottom: 1px solid #b8b5ad;
    font-family: "Liberation Sans", sans-serif;
    font-size: 12px;
}

/* toolbars */
.toolbar {
    height: 38px;
    flex: none;
    display: flex;
    align-items: center;
    padding-left: 5px;
    border-bottom: 1px solid #a9a69f;
    border-top: 1px solid #ecebe6;
}

.toolbar-2 {
    border-bottom: 0;
}

.grip {
    width: 4px;
    height: 22px;
    margin-right: 4px;
    background-image: radial-gradient(#a09d96 0.8px, transparent 1px);
    background-size: 3px 3px;
}

.tb {
    flex: 0 0 33px;
    height: 31px;
    display: flex;
    align-items: center;
    justify-content: center;
}

.tb svg {
    width: 24px;
    height: 24px;
}

.pressed {
    flex-basis: 31px;
    margin-right: 2px;
    border: 1px solid #8e8c85;
    border-radius: 3px;
    background: #c4c1ba;
}

.off {
    opacity: 0.32;
    filter: grayscale(1);
}

.dd {
    flex: 0 0 10px;
    position: relative;
    height: 10px;
}

.dd::after {
    content: "";
    position: absolute;
    left: 0;
    top: 3px;
    border: 4px solid transparent;
    border-top: 5px solid #555;
    border-bottom: 0;
}

.dd + .tb {
    margin-left: 2px;
}

.dd-r {
    margin-left: 15px;
}

.dd-n {
    margin-left: -4px;
}

.dd-p {
    margin-left: 5px;
}

.tb-n {
    flex-basis: 28px;
}

.tb.n2 {
    margin-left: 7px;
}

.tb.n3 {
    margin-left: 11px;
}

.tb.n4 {
    margin-left: 9px;
}

.tb.n5 {
    margin-left: 4px;
}

.tb.n6 {
    margin-left: -3px;
}

.sep {
    height: 24px;
    width: 4px;
    background-image: radial-gradient(#a09d96 0.8px, transparent 1px);
    background-size: 3px 3px;
}

.s1 {
    margin: 0 5px 0 7px;
}

.s2 {
    margin: 0 3.500px 0 10px;
}

.s3 {
    margin: 0 4.500px 0 11.500px;
}

.s4 {
    margin: 0 13px 0 7px;
}

.s5 {
    margin: 0 5px 0 8px;
}

.s6 {
    margin: 0 7.500px 0 6px;
}

.sigma {
    font-family: "Liberation Serif", serif;
    font-size: 30px;
    font-weight: 700;
    color: #9a1a9a;
}

.more {
    margin-left: 26px;
    width: 8px;
    font-size: 14px;
    color: #444;
}

.reload {
    flex-basis: 24px;
    margin-left: 6px;
}

.reload svg {
    width: 20px;
    height: 20px;
}

.reload-text {
    font-family: "Liberation Sans", sans-serif;
    font-size: 10.600px;
    margin-left: -2px;
}

.cad-input {
    width: 144px;
    height: 22px;
    flex: none;
    background: #fff;
    border: 1px solid #aaa;
    border-radius: 3px;
    padding: 3px 2px;
    font-family: "Liberation Sans", sans-serif;
    font-size: 11px;
    letter-spacing: 0.25px;
    white-space: nowrap;
    overflow: hidden;
    color: #666;
}

.tb-xml svg {
    width: 26px;
    height: 30px;
}

.svg-bold-9 {
    font: 700 8px "Liberation Sans", sans-serif;
    fill: #222;
}

.svg-e {
    font: 700 17px "Liberation Sans", sans-serif;
    fill: #fff;
}

.svg-xml {
    font: 700 6px "DejaVu Sans Mono", monospace;
    fill: #fff;
}

.svg-cmd {
    font: 700 7px "Liberation Mono", monospace;
    fill: #ddd;
}

.svg-64 {
    font: 700 7px "Liberation Sans", sans-serif;
    fill: #111;
}

.svg-12 {
    font: 700 8px "Liberation Sans", sans-serif;
    fill: #d02020;
}

.svg-qc {
    font: 700 10px "Liberation Sans", sans-serif;
    fill: #fff;
}

.svg-xsd {
    font: 700 8px "Liberation Sans", sans-serif;
    fill: #f6d040;
}

/* main row */
.main {
    height: 626px;
    flex: none;
    display: flex;
}

.strip {
    width: 46px;
    flex: none;
    display: flex;
    flex-direction: column;
    align-items: center;
    padding: 6px 0 0 6px;
}

.strip-grip {
    width: 22px;
    height: 4px;
    margin-bottom: 5px;
    background-image: radial-gradient(#a09d96 0.8px, transparent 1px);
    background-size: 3px 3px;
}

.st {
    height: 32px;
    flex: none;
    display: flex;
    align-items: center;
}

.st svg {
    width: 24px;
    height: 24px;
}

.strip-more {
    margin-top: 12px;
    font-size: 12px;
    transform: rotate(90deg);
    color: #333;
}

/* left dock */
.dock-left {
    width: 408px;
    flex: none;
    padding: 0 20px 13px 15px;
    display: flex;
    flex-direction: column;
}

.dock-head {
    height: 22px;
    flex: none;
    margin-top: 1px;
    display: flex;
    align-items: center;
    gap: 2px;
    margin-right: -16px;
    margin-left: -5px;
    padding-right: 8px;
}

.dock-title {
    margin-right: auto;
    font-size: 11.200px;
}

.dock-btn {
    width: 12px;
    height: 12px;
    border: 1px solid #8a8780;
    border-radius: 2px;
    font-size: 9px;
    line-height: 10px;
    text-align: center;
    color: #333;
    background: #dcd9d2;
}

.tabs {
    margin-top: 8px;
    height: 20px;
    flex: none;
    display: flex;
    margin-left: 2px;
    margin-right: -1px;
}

.tab {
    padding: 2px 0 0;
    height: 20px;
    border: 1px solid #b3b0a9;
    border-bottom: 0;
    border-radius: 3px 3px 0 0;
    background: #d4d1ca;
    font-size: 11.200px;
    text-align: center;
    white-space: nowrap;
    margin-right: 1px;
    flex: none;
}

.t1 {
    width: 63px;
}

.t2 {
    width: 55px;
}

.t3 {
    width: 49px;
}

.t4 {
    width: 94px;
}

.tab-on {
    background: #e0ddd6;
    border-right: 1px solid #555;
}

.tab-x {
    display: inline-block;
    width: 11px;
    height: 11px;
    font-size: 10px;
    line-height: 9px;
    text-align: center;
    border: 1px solid #777;
    border-radius: 2px;
    margin-left: 1px;
}

.tab-cut {
    width: 76px;
    border-right: 0;
    margin-right: 0;
    padding-left: 2px;
    letter-spacing: -0.2px;
    text-align: left;
}

.tab-scroll {
    width: 15px;
    height: 20px;
    flex: none;
    background: #dedbd4;
    border: 1px solid #b3b0a9;
    border-radius: 2px;
    display: flex;
    align-items: center;
    justify-content: center;
}

.arr-l {
    border: 4px solid transparent;
    border-right: 5px solid #aaa;
    border-left: 0;
}

.arr-r {
    border: 4px solid transparent;
    border-left: 5px solid #333;
    border-right: 0;
}

.pane {
    height: 562px;
    flex: none;
    border: 1px solid #a9a69f;
    background: #e0ddd6;
    padding: 11px 11px 9px;
}

.meta {
    width: 349px;
    height: 540px;
    table-layout: fixed;
    border-collapse: collapse;
    background: #fff;
    border: 1px solid #9e9c96;
}

.c0 {
    width: 18px;
}

.c1 {
    width: 230px;
}

.c2 {
    width: 101px;
}

.meta tr {
    height: 30px;
}

.meta td {
    border: 1px solid #a9a7a1;
    padding: 0 0 0 2px;
    white-space: nowrap;
    overflow: hidden;
    font-size: 11.350px;
}

.meta td + td {
    padding-left: 3px;
}

.meta th {
    font-weight: 400;
    font-size: 11.350px;
    background: linear-gradient(#e0ddd6, #cfccc5);
    border-bottom: 1px solid #a9a7a1;
}

.meta tbody th {
    text-align: left;
    padding-left: 2px;
}

.meta thead th {
    border-right: 1px solid #a9a7a1;
}

.row-empty td {
    border: 0 !important;
}

.row-empty th {
    border: 0 !important;
}

/* map */
.map {
    width: 570px;
    flex: none;
    height: 624px;
    padding-top: 2px;
    overflow: hidden;
}

.map-svg {
    display: block;
    width: 570px;
    height: 621px;
}

.vx circle {
    fill: #b41fb4;
    stroke: #2a2ad8;
    stroke-width: 1.500;
}

.vx-w circle {
    fill: #fff;
    stroke: #e03050;
}

.dots circle {
    fill: #000;
}

.lbl-red text {
    font: 15px "Noto Sans", sans-serif;
    fill: #f84444;
}

.lbl-blue text {
    font: 14px "Noto Sans", sans-serif;
    fill: #4a4af0;
}

.lbl-grey {
    font: 14px "DejaVu Sans", sans-serif;
    fill: #333;
}

.lbl-shield {
    font: 700 15px "DejaVu Sans", sans-serif;
    fill: #7a6e5e;
}

/* right dock */
.dock-right {
    width: 256px;
    flex: none;
    padding-left: 8px;
    display: flex;
    flex-direction: column;
}

.dock-head-r {
    margin: 1px 0 0;
    padding-left: 3px;
    padding-right: 2px;
}

.layer-tools {
    height: 26px;
    flex: none;
    position: relative;
    display: flex;
    align-items: center;
    padding-left: 6px;
}

.lt {
    width: 18px;
    height: 18px;
    flex: none;
}

.lt1 {
    margin-right: 9px;
}

.lt2 {
    margin-right: 7px;
}

.lt3 {
    margin-right: 7px;
}

.lt4 {
    margin-right: 7px;
}

.lt-e {
    width: 16px;
    font-size: 18px;
    line-height: 18px;
    font-family: "Liberation Serif", serif;
}

.lt-dd {
    flex-basis: 16px;
    margin-left: 3px;
}

.lt6,
.lt7 {
    margin-right: 7px;
}

.tree {
    flex: 1;
    background: #fff;
    margin-top: 1px;
    padding-top: 3px;
}

.row {
    height: 18px;
    display: flex;
    align-items: center;
    position: relative;
    font-weight: 700;
    font-size: 11px;
}

.r0 {
    padding-left: 23px;
}

.r1 {
    padding-left: 43px;
}

.r2 {
    padding-left: 23px;
}

.row-sel {
    background: #d4d0c8;
}

.arr-d {
    position: absolute;
    left: 6px;
    top: 7px;
    border: 4px solid transparent;
    border-top: 4px solid #555;
    border-bottom: 0;
}

.arr-rr {
    position: absolute;
    left: 8px;
    top: 5px;
    border: 4px solid transparent;
    border-left: 4px solid #555;
    border-right: 0;
}

.cb {
    width: 13px;
    height: 13px;
    flex: none;
    border: 1px solid #8a8a8a;
    background: #fff;
    position: relative;
}

.cb.on::after {
    content: "";
    position: absolute;
    left: 3px;
    top: 0;
    width: 4px;
    height: 9px;
    border: solid #000;
    border-width: 0 2px 2px 0;
    transform: rotate(40deg);
}

.sw {
    width: 16px;
    height: 16px;
    margin-left: 7px;
    flex: none;
}

.lname {
    margin-left: 6px;
    white-space: nowrap;
}

.lname-tight {
    margin-left: 4px;
}

.lname-reg {
    font-weight: 400;
    font-family: "Liberation Sans", sans-serif;
    font-size: 10.800px;
    margin-left: 6px;
}

.lname-off {
    font-style: italic;
    color: #8a8a8a;
}

.lname-u {
    text-decoration: underline;
}

.swatch-teal {
    width: 15px;
    height: 14px;
    margin-left: 7px;
    background: #b5e3d8;
}

.r2 .lname {
    margin-left: 7px;
}

.sw-grid {
    width: 15px;
    height: 15px;
    margin-left: 7px;
    flex: none;
}

.ind {
    width: 18px;
    height: 18px;
    position: absolute;
    right: 5px;
    top: 0;
}

/* status bar */
.statusbar {
    height: 25px;
    flex: none;
    display: flex;
    align-items: center;
    padding-bottom: 4px;
    font-size: 10.800px;
}

.locator {
    width: 254px;
    height: 20px;
    margin-left: 4px;
    background: #fff;
    border: 1px solid #bbb;
    border-radius: 3px;
    display: flex;
    align-items: center;
    padding-left: 7px;
    gap: 6px;
    color: #8a8a8a;
}

.ic-14 {
    width: 14px;
    height: 14px;
}

.ic-16 {
    width: 16px;
    height: 16px;
    flex: none;
}

.st-label {
    white-space: nowrap;
}

.st-coord {
    margin-left: 95px;
    width: 67px;
}

.field {
    background: #fff;
    border: 1px solid #bbb;
    border-radius: 3px;
    height: 20px;
    line-height: 18px;
    white-space: pre;
}

.f-coord {
    width: 136px;
    padding-left: 5px;
}

.mouse {
    margin-left: 6px;
}

.st-scale {
    margin-left: 10px;
    width: 50px;
}

.combo {
    width: 85px;
    height: 20px;
    display: flex;
    align-items: center;
    background: #fff;
    border: 1px solid #bbb;
    border-radius: 3px;
    padding-left: 3px;
}

.combo-btn {
    margin-left: auto;
    width: 19px;
    height: 18px;
    background: #e0ddd6;
    border-left: 1px solid #bbb;
    position: relative;
}

.dd-in {
    position: absolute;
    left: 5px;
    top: 7px;
    border: 4px solid transparent;
    border-top: 4px solid #444;
    border-bottom: 0;
}

.lock {
    margin-left: 11px;
}

.st-mag {
    margin-left: 6px;
    width: 67px;
}

.spin {
    height: 20px;
    display: flex;
    align-items: center;
    background: #fff;
    border: 1px solid #bbb;
    border-radius: 3px;
    padding-left: 4px;
}

.s-mag {
    width: 83px;
}

.s-rot {
    width: 81px;
}

.spin-val {
    flex: 1;
}

.spin-x {
    width: 13px;
    height: 11px;
    margin-right: 4px;
    background: #9a9a9a;
    color: #fff;
    line-height: 10px;
    text-align: center;
    border-radius: 2px;
}

.spin-btn {
    width: 13px;
    height: 18px;
    background: #e0ddd6;
    border-left: 1px solid #bbb;
    display: flex;
    flex-direction: column;
    align-items: center;
    justify-content: center;
    gap: 2px;
}

.up {
    border: 3.500px solid transparent;
    border-bottom: 4px solid #444;
    border-top: 0;
}

.down {
    border: 3.500px solid transparent;
    border-top: 4px solid #444;
    border-bottom: 0;
}

.st-rot {
    margin-left: 9px;
    width: 67px;
}

.st-cb {
    margin-left: 9px;
}

.st-vis {
    margin-left: 4px;
    width: 68px;
}

.globe {
    margin-left: 8px;
}

.st-epsg {
    margin-left: 2px;
    width: 77px;
}

/* taskbar */
.taskbar {
    height: 30px;
    flex: none;
    background: #1b1b1b;
    display: flex;
    align-items: stretch;
}

.tk {
    width: 37.500px;
    flex: none;
    display: flex;
    align-items: center;
    justify-content: center;
    position: relative;
}

.tk svg {
    width: 20px;
    height: 20px;
}

.tk-win {
    margin-right: -1px;
}

.tk-on::after {
    content: "";
    position: absolute;
    left: 5px;
    right: 5px;
    bottom: 0;
    height: 2px;
    background: #6a9ad0;
}

.tk-qgis {
    background: #3a3a3a;
    border-bottom: 2px solid #6a9ad0;
}

.tray {
    margin-left: auto;
    display: flex;
    align-items: center;
    padding-right: 24px;
}

.tr {
    width: 16px;
    height: 16px;
    flex: none;
    margin-right: 8px;
}

.tr-note {
    width: 18px;
    height: 18px;
    margin: 0 0 0 24px;
}

.clock {
    color: #333;
    font-size: 11.500px;
}

/* callouts */
.overlay {
    position: absolute;
    left: 0;
    top: 0;
    width: 1280px;
    height: 800px;
    pointer-events: none;
}

.note text {
    font: 20px "DejaVu Sans Mono", monospace;
    fill: #111;
}

.mark {
    position: absolute;
    border: 5px solid #ed1c24;
    pointer-events: none;
}

.mark-dock {
    left: 46px;
    top: 115px;
    width: 408px;
    height: 631px;
}

.mark-xml {
    left: 1045px;
    top: 77px;
    width: 55px;
    height: 48px;
}

.mark-tree {
    left: 1027px;
    top: 167px;
    width: 253px;
    height: 171px;
}
```
